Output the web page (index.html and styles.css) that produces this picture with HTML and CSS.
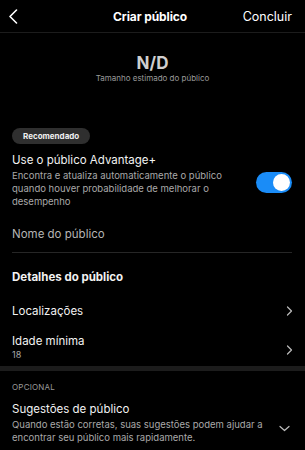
FILE: index.html
```html
<!DOCTYPE html>
<html lang="pt">
<head>
<meta charset="utf-8">
<link rel="stylesheet" href="styles.css">
</head>
<body>
<div class="screen">
  <header class="topbar">
    <span class="back">
      <svg width="10" height="15" viewBox="0 0 10 15"><path d="M8.5 1 L2 7.5 L8.5 14" fill="none" stroke="#fff" stroke-width="1.6" stroke-linecap="round" stroke-linejoin="round"/></svg>
    </span>
    <span class="title">Criar público</span>
    <span class="done">Concluir</span>
  </header>

  <section class="summary">
    <div class="size">N/D</div>
    <div class="size-label">Tamanho estimado do público</div>
  </section>

  <section class="content">
    <span class="badge">Recomendado</span>
    <div class="adv-row">
      <div class="adv-text">
        <div class="item-title">Use o público Advantage+</div>
        <div class="desc">Encontra e atualiza automaticamente o público quando houver probabilidade de melhorar o desempenho</div>
      </div>
      <div class="toggle"><span class="knob"></span></div>
    </div>

    <div class="name-field">Nome do público</div>

    <h2 class="section-title">Detalhes do público</h2>

    <div class="nav-row row-loc">
      <div class="item-title">Localizações</div>
      <svg class="chev" width="7" height="10" viewBox="0 0 7 10"><path d="M1.5 1 L5.5 5 L1.5 9" fill="none" stroke="#bdbdbd" stroke-width="1.2" stroke-linecap="round" stroke-linejoin="round"/></svg>
    </div>
    <div class="nav-row row-age">
      <div>
        <div class="item-title">Idade mínima</div>
        <div class="value">18</div>
      </div>
      <svg class="chev" width="7" height="10" viewBox="0 0 7 10"><path d="M1.5 1 L5.5 5 L1.5 9" fill="none" stroke="#bdbdbd" stroke-width="1.2" stroke-linecap="round" stroke-linejoin="round"/></svg>
    </div>
  </section>

  <div class="band"></div>

  <section class="content optional">
    <div class="overline">OPCIONAL</div>
    <div class="sugg-row">
      <div class="sugg-text">
        <div class="item-title">Sugestões de público</div>
        <div class="desc">Quando estão corretas, suas sugestões podem ajudar a encontrar seu público mais rapidamente.</div>
      </div>
      <svg class="chev-down" width="11" height="7" viewBox="0 0 11 7"><path d="M1 1.5 L5.5 5.5 L10 1.5" fill="none" stroke="#bdbdbd" stroke-width="1.2" stroke-linecap="round" stroke-linejoin="round"/></svg>
    </div>
  </section>
</div>
</body>
</html>
```

FILE: styles.css
```css
* { box-sizing: border-box; margin: 0; padding: 0; }
html, body { background: #000; }
body {
  width: 305px;
  height: 450px;
  overflow: hidden;
  font-family: Inter, "Noto Sans", "Liberation Sans", sans-serif;
  color: #f2f2f2;
}
.screen { width: 305px; }

.topbar {
  height: 33px;
  border-bottom: 1px solid #1c1c1c;
  display: grid;
  grid-template-columns: 1fr auto 1fr;
  align-items: center;
  padding: 0 13px 0 8px;
}
.back { display: flex; align-items: center; }
.title {
  font-size: 12px;
  font-weight: 700;
  color: #fff;
  letter-spacing: -0.1px;
}
.done {
  justify-self: end;
  font-size: 12.5px;
  color: #fff;
}

.summary {
  margin-top: 20px;
  text-align: center;
}
.size {
  font-size: 17px;
  line-height: 20px;
  font-weight: 700;
  color: #cfcfcf;
}
.size-label {
  font-size: 8px;
  line-height: 10px;
  color: #9a9a9a;
}

.content { padding: 0 13px 0 12px; }

.badge {
  display: inline-block;
  margin-top: 45px;
  height: 16px;
  line-height: 16px;
  padding: 0 11px;
  border-radius: 8px;
  background: #2f2f2f;
  font-size: 8px;
  font-weight: 700;
  color: #f0f0f0;
}

.adv-row {
  display: flex;
  align-items: center;
  margin-top: 9px;
}
.adv-text { flex: 1; padding-right: 24px; }
.item-title {
  font-size: 11.5px;
  line-height: 14px;
  color: #f2f2f2;
}
.desc {
  margin-top: 2px;
  font-size: 9.5px;
  line-height: 13px;
  color: #a9a9a9;
}
.toggle {
  width: 36px;
  height: 21px;
  border-radius: 11px;
  background: #1a8cf7;
  display: flex;
  align-items: center;
  justify-content: flex-end;
  padding: 0 2px;
  margin-top: 3px;
  flex-shrink: 0;
}
.knob {
  width: 17px;
  height: 17px;
  border-radius: 50%;
  background: #fff;
}

.name-field {
  margin-top: 19px;
  padding-bottom: 11px;
  border-bottom: 1px solid #262626;
  font-size: 11.5px;
  line-height: 14px;
  color: #b5b5b5;
}

.section-title {
  margin-top: 17px;
  font-size: 11.5px;
  line-height: 14px;
  font-weight: 700;
  color: #f2f2f2;
}

.nav-row {
  display: flex;
  align-items: center;
  justify-content: space-between;
}
.row-loc { margin-top: 20px; }
.row-age { margin-top: 16px; }
.chev { flex-shrink: 0; margin-right: -1px; }
.row-age .chev { margin-top: 6px; }
.value {
  margin-top: 1px;
  font-size: 9px;
  line-height: 11px;
  color: #a9a9a9;
}

.band {
  margin-top: 6px;
  height: 5px;
  background: #1c1c1c;
}

.optional { padding-top: 11px; }
.overline {
  font-size: 8px;
  line-height: 10px;
  color: #9a9a9a;
  letter-spacing: 0.2px;
}
.sugg-row {
  display: flex;
  align-items: center;
  margin-top: 10px;
}
.sugg-text { flex: 1; padding-right: 6px; }
.chev-down { flex-shrink: 0; margin-top: 10px; margin-right: 2px; }
```
